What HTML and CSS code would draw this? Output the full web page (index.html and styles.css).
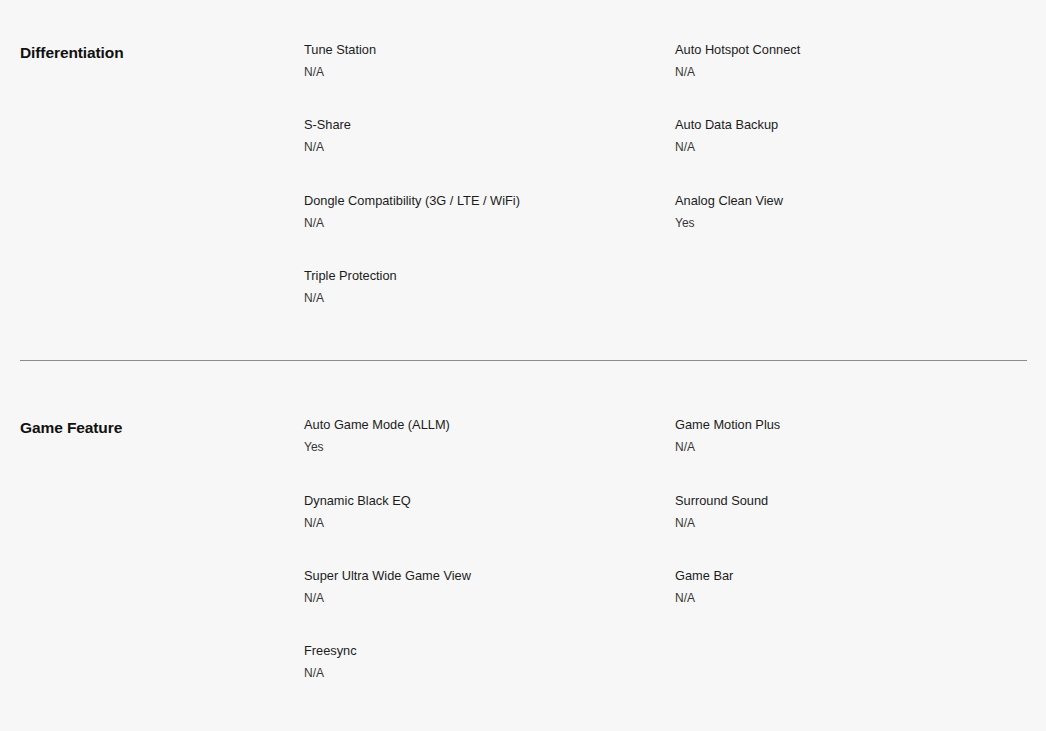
FILE: index.html
```html
<!DOCTYPE html>
<html>
<head>
<meta charset="utf-8">
<link rel="stylesheet" href="styles.css">
</head>
<body>
<div class="specs">
  <section class="group first">
    <h2 class="group-title">Differentiation</h2>
    <div class="items">
      <div class="item"><div class="name">Tune Station</div><div class="value">N/A</div></div>
      <div class="item"><div class="name">Auto Hotspot Connect</div><div class="value">N/A</div></div>
      <div class="item"><div class="name">S-Share</div><div class="value">N/A</div></div>
      <div class="item"><div class="name">Auto Data Backup</div><div class="value">N/A</div></div>
      <div class="item"><div class="name">Dongle Compatibility (3G / LTE / WiFi)</div><div class="value">N/A</div></div>
      <div class="item"><div class="name">Analog Clean View</div><div class="value">Yes</div></div>
      <div class="item"><div class="name">Triple Protection</div><div class="value">N/A</div></div>
    </div>
  </section>
  <section class="group">
    <h2 class="group-title">Game Feature</h2>
    <div class="items">
      <div class="item"><div class="name">Auto Game Mode (ALLM)</div><div class="value">Yes</div></div>
      <div class="item"><div class="name">Game Motion Plus</div><div class="value">N/A</div></div>
      <div class="item"><div class="name">Dynamic Black EQ</div><div class="value">N/A</div></div>
      <div class="item"><div class="name">Surround Sound</div><div class="value">N/A</div></div>
      <div class="item"><div class="name">Super Ultra Wide Game View</div><div class="value">N/A</div></div>
      <div class="item"><div class="name">Game Bar</div><div class="value">N/A</div></div>
      <div class="item"><div class="name">Freesync</div><div class="value">N/A</div></div>
    </div>
  </section>
</div>
</body>
</html>
```
FILE: styles.css
```css
html, body {
  margin: 0;
  padding: 0;
  background: #f7f7f7;
}
body {
  font-family: "Liberation Sans", Arial, sans-serif;
  color: #1a1a1a;
}
.specs {
  padding: 0 19px 0 20px;
}
.group {
  display: grid;
  grid-template-columns: 284px 1fr;
  padding: 54px 0 52px;
  border-top: 1px solid #8c8c8c;
}
.group.first {
  padding-top: 40px;
  border-top: none;
}
.group-title {
  margin: 0;
  padding-top: 1px;
  font-size: 15.5px;
  line-height: 24px;
  font-weight: bold;
  color: #111;
  letter-spacing: -0.1px;
}
.items {
  display: grid;
  grid-template-columns: 371px 1fr;
  row-gap: 33.4px;
}
.item .name {
  font-size: 12.8px;
  line-height: 20px;
  color: #1c1c1c;
}
.item .value {
  margin-top: 2px;
  font-size: 12px;
  line-height: 20px;
  color: #363636;
}
```
